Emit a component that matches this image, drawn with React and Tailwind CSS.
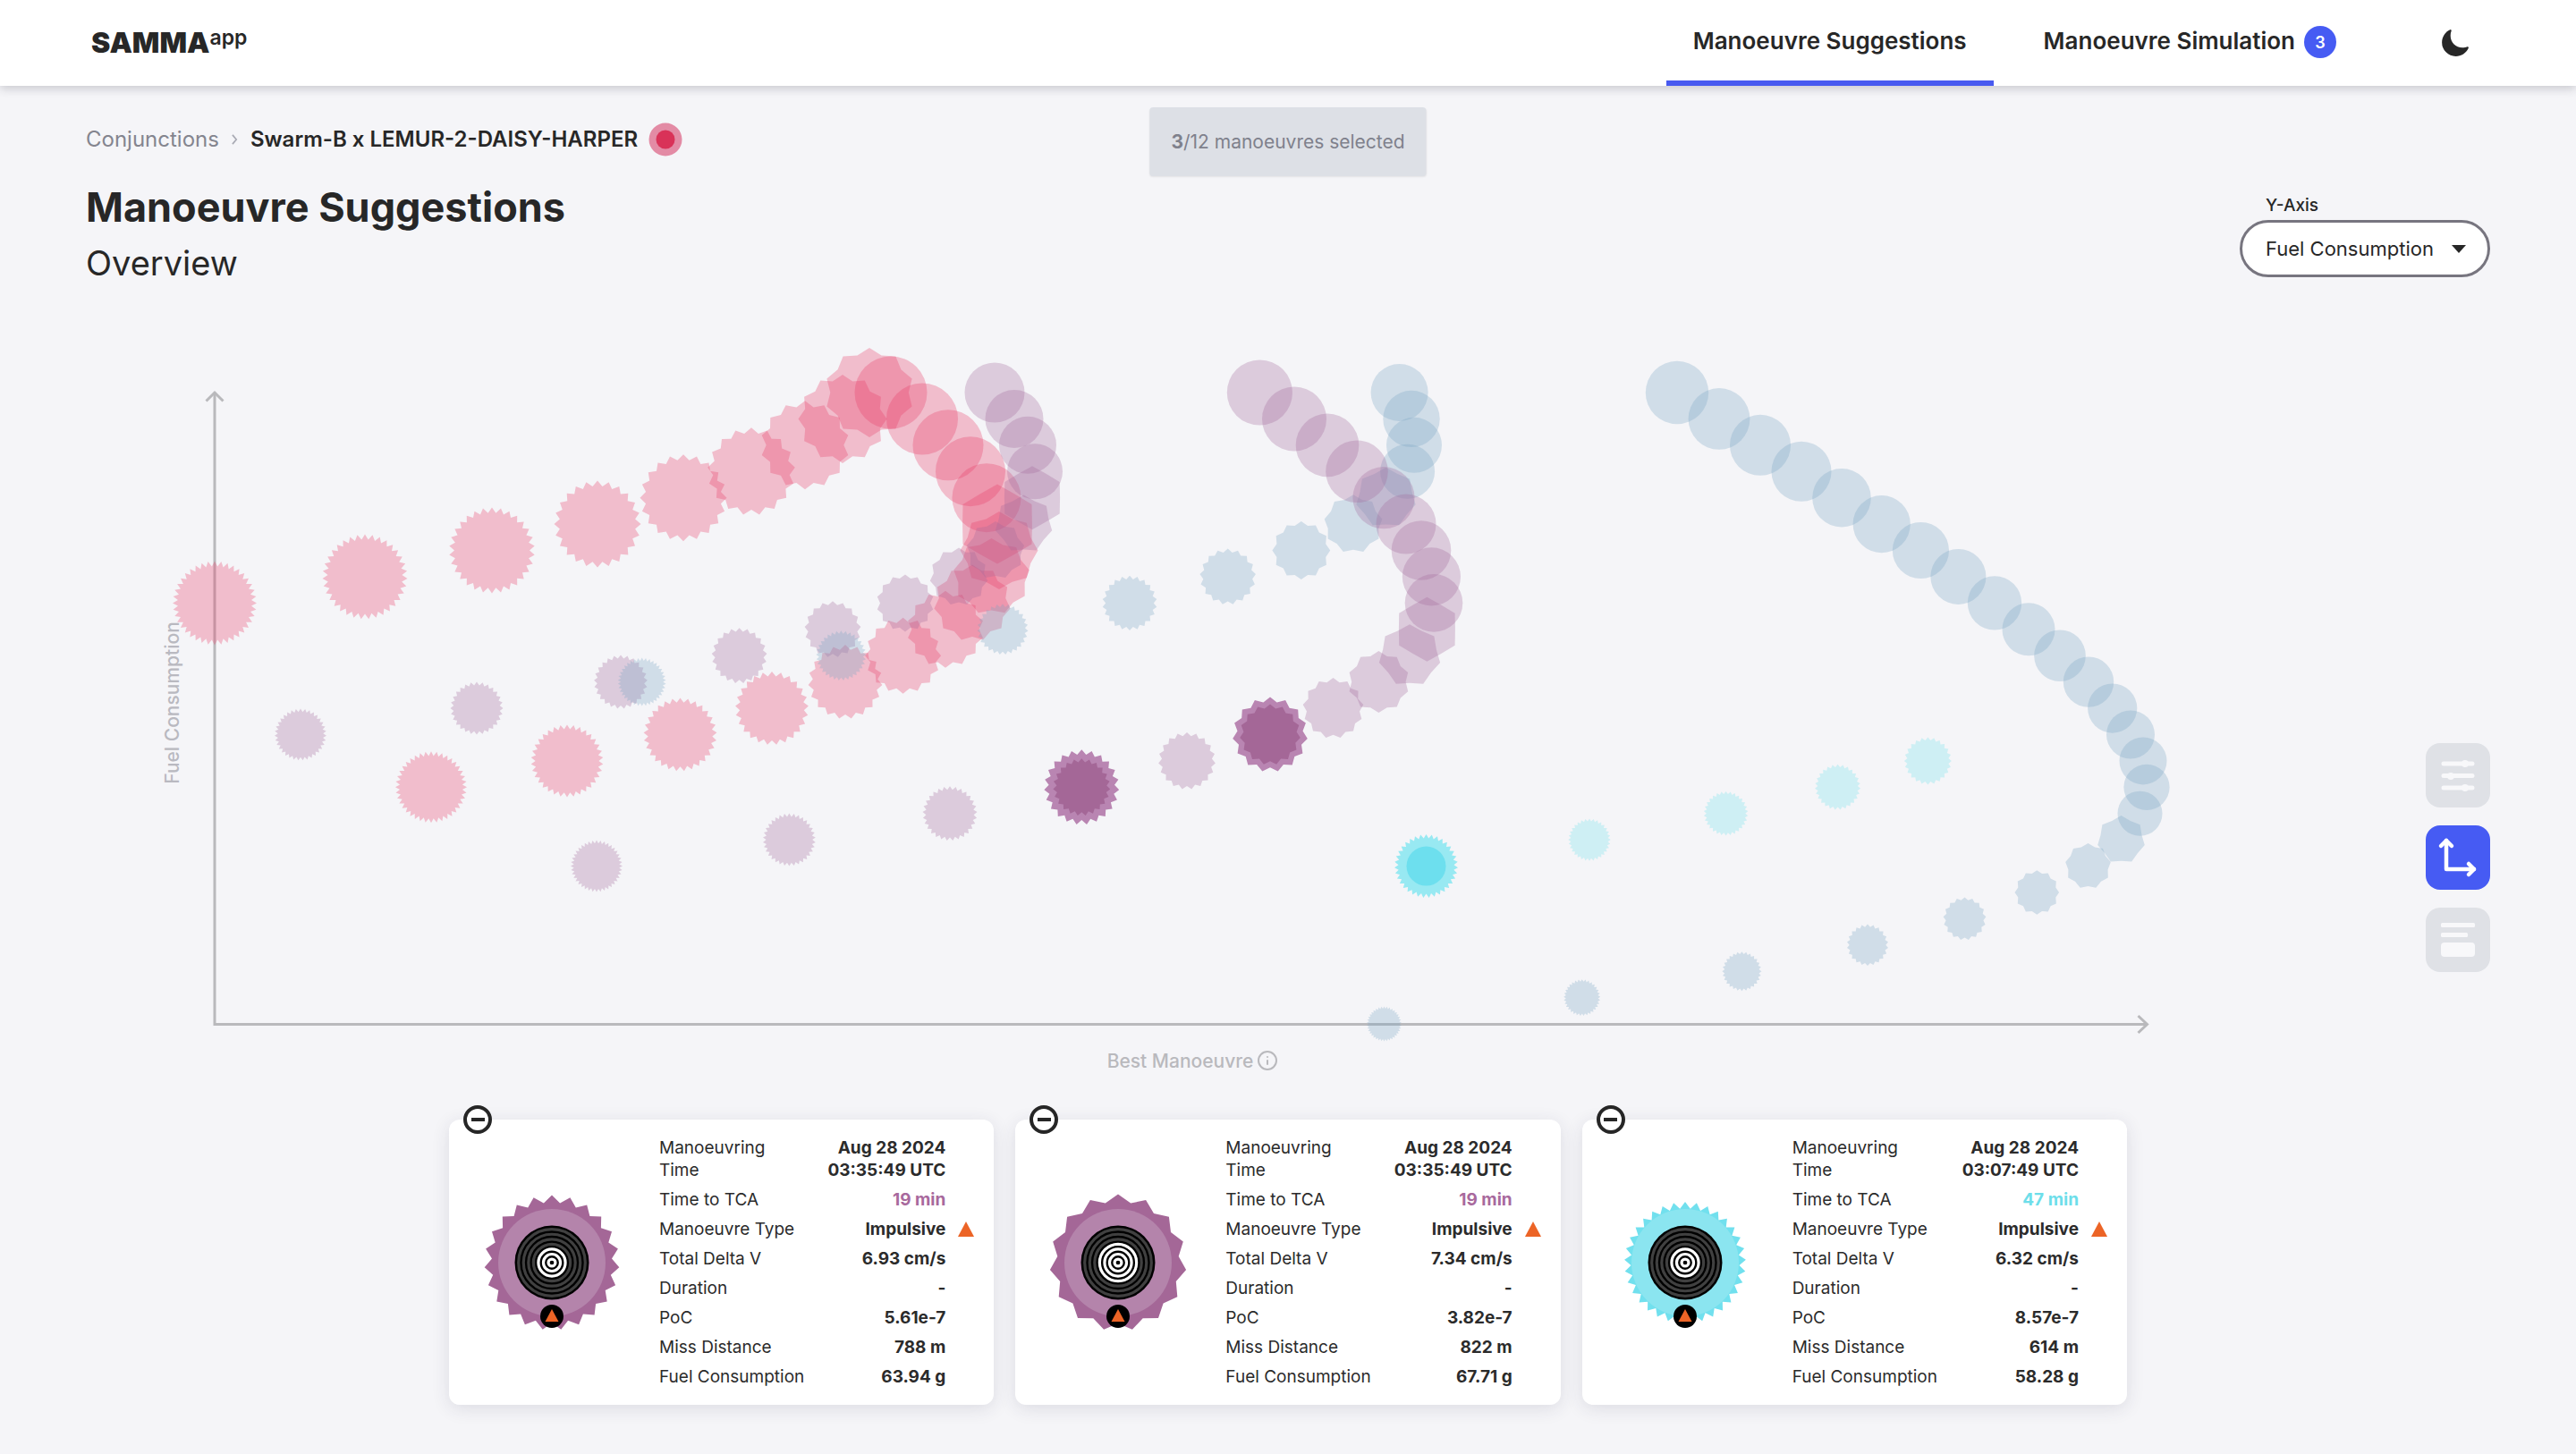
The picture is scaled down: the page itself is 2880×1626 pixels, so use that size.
import { useState } from "react";
import { Info } from "lucide-react";
import { IoMoon } from "react-icons/io5";

const RED = "#e83a66";
const PURPLE = "#a2699b";
const BLUE = "#7aa5c3";
const CYAN = "#73e1eb";

const TOP_ROW = 439;
const ROW_STEP = 29.42;

// Each marker: [row, x, radius, teeth]; teeth 0 is a plain circle.
// A selected marker adds [haloRadius, haloTeeth].
const SERIES = [
  {
    color: RED,
    markers: [
      [8, 240, 47, 40], [7, 408, 47.5, 35], [6, 550, 48, 30], [5, 668, 48.5, 24],
      [4, 764, 48.5, 20], [3, 840, 49, 17], [2, 900, 49.5, 14], [1, 942, 49.5, 12],
      [0, 972, 50, 10],
    ],
  },
  {
    color: RED,
    markers: [
      [0, 996, 40.5, 0], [1, 1031, 40, 0], [2, 1060, 39.5, 0], [3, 1085, 39, 0],
      [4, 1103, 38.5, 0], [5, 1115, 44.5, 6], [6, 1117, 43.5, 8], [7, 1108.5, 43, 9],
      [8, 1087, 43, 11], [9, 1057, 43, 14], [10, 1009.6, 42.5, 16], [11, 945, 41.5, 19],
      [12, 863, 41, 25], [13, 760.5, 41, 29], [14, 634, 40.5, 34], [15, 482, 40, 40],
    ],
  },
  {
    color: PURPLE,
    markers: [
      [0, 1112, 33.5, 0], [1, 1134, 32.5, 0], [2, 1149, 32, 0], [3, 1157, 31, 0],
      [4, 1154, 35.5, 6], [5, 1144.5, 32.5, 7], [6, 1113, 32.5, 9], [7, 1072, 32.5, 11],
      [8, 1012, 32, 14], [9, 931, 31.5, 17], [10, 826.6, 31, 21], [11, 694, 30, 25],
      [12, 533, 29.5, 28], [13, 336, 29, 35],
    ],
  },
  {
    color: BLUE,
    markers: [
      [0, 1564.6, 32, 0], [1, 1578, 31.7, 0], [2, 1581, 31, 0], [3, 1573.6, 30.5, 0],
      [4, 1549.5, 34, 7], [5, 1513, 32.8, 9], [6, 1454.8, 32.4, 12], [7, 1372.7, 31.4, 17],
      [8, 1263, 30.6, 22], [9, 1121, 28.5, 27], [10, 940.4, 28, 33], [11, 717.7, 27, 38],
    ],
  },
  {
    color: PURPLE,
    markers: [
      [0, 1408.4, 36.6, 0], [1, 1447, 36, 0], [2, 1484, 35.3, 0], [3, 1517, 34.8, 0],
      [4, 1547, 34.6, 0], [5, 1572, 33.5, 0], [6, 1589, 33.3, 0], [7, 1600.4, 32.6, 0],
      [8, 1603, 32.3, 0], [9, 1595.4, 36, 6], [10, 1576, 35, 7], [11, 1541.4, 34.5, 10],
      [12, 1490.5, 34, 13], [13, 1420, 34, 15, 42], [14, 1327, 32, 19], [15, 1209.3, 32, 23, 42],
      [16, 1062, 30.5, 29], [17, 882.4, 29.5, 34], [18, 667, 29, 40],
    ],
  },
  {
    color: BLUE,
    markers: [
      [0, 1875, 35.2, 0], [1, 1922, 34.4, 0], [2, 1968, 34, 0], [3, 2014, 33.5, 0],
      [4, 2059, 32.8, 0], [5, 2103.7, 32.1, 0], [6, 2147.4, 31.6, 0], [7, 2189.4, 31, 0],
      [8, 2230, 30.2, 0], [9, 2268, 29.5, 0], [10, 2303, 28.8, 0], [11, 2335, 28.2, 0],
      [12, 2361.7, 27.6, 0], [13, 2382, 27, 0], [14, 2396, 26.5, 0], [15, 2400, 25.6, 0],
      [16, 2392.5, 25, 0], [17, 2371.5, 27, 7], [18, 2334.5, 25.7, 9], [19, 2277.3, 24.8, 12],
      [20, 2196.5, 24, 17], [21, 2088, 23.2, 22], [22, 1947.4, 22, 28], [23, 1768.7, 20.5, 33],
      [24, 1547.5, 19.5, 38],
    ],
  },
  {
    color: CYAN,
    markers: [
      [14, 2155.4, 26.5, 24], [15, 2054.6, 25.5, 27], [16, 1929.6, 24.8, 30],
      [17, 1777, 23.7, 32], [18, 1594.5, 22, 0, 35.5, 35],
    ],
  },
];

const SELECTED = {
  [PURPLE]: { halo: "#b985b2", core: "#a46797" },
  [CYAN]: { halo: "#98e9f2", core: "#6ddfee" },
};

function starPoints(cx, cy, outer, teeth, ratio = 0.875) {
  const pts = [];
  for (let i = 0; i < teeth * 2; i++) {
    const r = i % 2 === 0 ? outer : outer * ratio;
    const a = (Math.PI * i) / teeth;
    pts.push(`${(cx + r * Math.sin(a)).toFixed(1)},${(cy - r * Math.cos(a)).toFixed(1)}`);
  }
  return pts.join(" ");
}

function Shape({ cx, cy, r, teeth, ...rest }) {
  return teeth ? (
    <polygon points={starPoints(cx, cy, r, teeth)} {...rest} />
  ) : (
    <circle cx={cx} cy={cy} r={r} {...rest} />
  );
}

function Marker({ data, color }) {
  const [row, x, r, teeth, halo, haloTeeth] = data;
  const y = TOP_ROW + row * ROW_STEP;
  if (!halo) return <Shape cx={x} cy={y} r={r} teeth={teeth} fill={color} fillOpacity={0.3} />;
  return (
    <g>
      <Shape cx={x} cy={y} r={halo} teeth={haloTeeth || teeth} fill={SELECTED[color].halo} />
      <Shape cx={x} cy={y} r={r} teeth={teeth} fill={SELECTED[color].core} />
    </g>
  );
}

function Chart() {
  return (
    <svg viewBox="0 0 2880 890" className="block w-full h-auto" role="img" aria-label="Fuel consumption by best manoeuvre">
      <g transform="translate(0 -340)">
        <g fill="none" stroke="#b9b9bc" strokeWidth="3">
          <path d="M240 439V1145.5H2400" />
          <path d="M230.500 448.500L240 439L249.500 448.500" />
          <path d="M2390.500 1136L2400.500 1145.500L2390.500 1155" />
        </g>
        <text transform="translate(200 786) rotate(-90)" textAnchor="middle" className="text-[21px] font-medium fill-[#b9b9c0]">
          Fuel Consumption
        </text>
        {SERIES.map((s, i) => (
          <g key={i}>
            {s.markers.map((m) => (
              <Marker key={m[0]} data={m} color={s.color} />
            ))}
          </g>
        ))}
      </g>
    </svg>
  );
}

function Badge({ teeth, radius, color, inner, whiteRings }) {
  const rings = [1, 2, 3, 4, 5, 6, 7];
  return (
    <svg viewBox="-80 -80 160 160" className="w-40 h-40 shrink-0" aria-hidden="true">
      <polygon points={starPoints(0, 0, radius, teeth, 0.89)} fill={color} />
      <circle r="60" fill={inner} />
      <circle r="41.500" fill="#000" />
      {rings.map((k) => (
        <circle
          key={k}
          r={5.56 * k - 1.6}
          fill="none"
          stroke={k <= whiteRings ? "#fff" : "#404040"}
          strokeWidth="3.200"
        />
      ))}
      <circle cy="60" r="13" fill="#000" />
      <path d="M0 52L7.500 66H-7.500Z" fill="#ec6426" />
    </svg>
  );
}

const CARDS = [
  {
    time: "03:35:49 UTC", tca: "19 min", tcaClass: "text-[#a8699d]", dv: "6.93 cm/s", poc: "5.61e-7", miss: "788 m", fuel: "63.94 g",
    badge: { teeth: 23, radius: 75.5, color: "#a46797", inner: "#b484ab", whiteRings: 3 },
  },
  {
    time: "03:35:49 UTC", tca: "19 min", tcaClass: "text-[#a8699d]", dv: "7.34 cm/s", poc: "3.82e-7", miss: "822 m", fuel: "67.71 g",
    badge: { teeth: 15, radius: 76.5, color: "#a46797", inner: "#b484ab", whiteRings: 4 },
  },
  {
    time: "03:07:49 UTC", tca: "47 min", tcaClass: "text-[#6ddeea]", dv: "6.32 cm/s", poc: "8.57e-7", miss: "614 m", fuel: "58.28 g",
    badge: { teeth: 33, radius: 68, color: "#71e0ee", inner: "#8be5f0", whiteRings: 3 },
  },
];

function Row({ label, children, valueClass = "", mark }) {
  return (
    <div className="flex items-start">
      <dt className="w-[180px]">{label}</dt>
      <dd className={`flex-1 text-right font-bold ${valueClass}`}>{children}</dd>
      <dd className="w-[54px] pl-3.5 pt-1" aria-hidden="true">
        {mark && (
          <svg viewBox="0 0 18 17" className="w-[18px] h-[17px]">
            <path d="M9 0L18 17H0Z" fill="#ec6426" />
          </svg>
        )}
      </dd>
    </div>
  );
}

function Card({ c }) {
  return (
    <article className="relative flex items-center rounded-xl bg-white pl-[35px] py-[19px] shadow-[0_4px_20px_rgba(40,40,70,0.12)]">
      <button aria-label="Remove manoeuvre" className="absolute left-4 -top-4 flex h-8 w-8 items-center justify-center rounded-full border-4 border-[#262626] bg-white">
        <span className="h-1 w-[15px] bg-[#262626]" />
      </button>
      <Badge {...c.badge} />
      <dl className="ml-10 flex flex-1 flex-col gap-2 text-[19px] leading-[25px] text-[#2b2b2b]">
        <Row label={<>Manoeuvring<br />Time</>}>Aug 28 2024<br />{c.time}</Row>
        <Row label="Time to TCA" valueClass={c.tcaClass}>{c.tca}</Row>
        <Row label="Manoeuvre Type" mark>Impulsive</Row>
        <Row label="Total Delta V">{c.dv}</Row>
        <Row label="Duration">-</Row>
        <Row label="PoC">{c.poc}</Row>
        <Row label="Miss Distance">{c.miss}</Row>
        <Row label="Fuel Consumption">{c.fuel}</Row>
      </dl>
    </article>
  );
}

function SlidersIcon() {
  return (
    <svg viewBox="0 0 72 72" className="h-full w-full" fill="#f8f8fa" stroke="#f8f8fa" strokeWidth="5" strokeLinecap="round">
      <path d="M20 23H52M20 36.500H52M20 50H52" />
      <circle cx="44" cy="23" r="1.500" />
      <circle cx="28" cy="37" r="1.500" />
      <circle cx="44" cy="50" r="1.500" />
    </svg>
  );
}

function AxesIcon() {
  return (
    <svg viewBox="0 0 72 72" className="h-full w-full" fill="none" stroke="#fff" strokeWidth="4.500" strokeLinecap="round" strokeLinejoin="round">
      <path d="M23 17V49H54" />
      <path d="M17 23L23 17L29 23M48 43L54 49L48 55" />
    </svg>
  );
}

function DetailIcon() {
  return (
    <svg viewBox="0 0 72 72" className="h-full w-full" fill="#f8f8fa">
      <rect x="17" y="17" width="38" height="5" rx="1.500" />
      <rect x="17" y="28" width="30" height="5" rx="1.500" />
      <rect x="17" y="39" width="38" height="16" rx="4" />
    </svg>
  );
}

const VIEWS = [
  { label: "Filters", Icon: SlidersIcon },
  { label: "Chart", Icon: AxesIcon, active: true },
  { label: "Details", Icon: DetailIcon },
];

export default function App() {
  const [axis, setAxis] = useState("Fuel Consumption");
  return (
    <div className="min-h-screen bg-[#f5f5f8] font-[Inter,sans-serif] text-[#272727]">
      <header className="relative z-10 flex h-24 items-stretch bg-white pl-[102px] pr-[118px] shadow-[0_3px_10px_rgba(40,40,60,0.22)]">
        <a href="#home" className="flex items-start pt-7 leading-10">
          <span className="text-[32px] font-black">SAMMA</span>
          <span className="text-[23px] font-semibold leading-7">app</span>
        </a>
        <nav className="ml-auto flex items-stretch text-[26px] font-semibold">
          <a href="#suggestions" aria-current="page" className="flex items-center border-b-[6px] border-[#485af0] px-[30px]">
            Manoeuvre Suggestions
          </a>
          <a href="#simulation" className="flex items-center gap-2.5 border-b-[6px] border-transparent pl-14">
            Manoeuvre Simulation
            <span className="mt-1 flex h-9 w-9 items-center justify-center rounded-full bg-[#465bf3] text-[18px] text-white">3</span>
          </a>
        </nav>
        <button aria-label="Toggle dark mode" className="ml-[116px] flex items-center">
          <IoMoon className="h-[34px] w-[34px]" />
        </button>
      </header>

      <main className="relative pb-14">
        <div role="status" className="absolute left-1/2 top-6 -translate-x-1/2 whitespace-nowrap rounded bg-[#dde0e6] px-6 py-6 text-[21px] leading-[29px] text-[#7f818c] shadow-[0_1px_2px_rgba(0,0,0,0.08)]">
          <strong>3</strong>/12 manoeuvres selected
        </div>

        <div className="flex items-end justify-between px-24 pt-10">
          <div>
            <nav aria-label="Breadcrumb" className="flex h-10 items-center text-[24px]">
              <a href="#conjunctions" className="text-[#84858f]">Conjunctions</a>
              <svg viewBox="0 0 8 14" className="mx-3.5 h-3 w-[7px]" fill="none" stroke="#a9aab4" strokeWidth="2" aria-hidden="true">
                <path d="M1 1L6 7L1 13" />
              </svg>
              <span className="font-semibold" aria-current="page">Swarm-B x LEMUR-2-DAISY-HARPER</span>
              <svg viewBox="0 0 38 38" className="ml-3 h-[38px] w-[38px]" aria-hidden="true">
                <circle cx="19" cy="19" r="18.500" fill="#e38ba5" />
                <circle cx="19" cy="19" r="10.500" fill="#d93258" />
              </svg>
            </nav>
            <h1 className="mt-6 text-[45px] font-bold leading-[64px]">Manoeuvre Suggestions</h1>
            <h2 className="text-[38px] leading-[60px]">Overview</h2>
          </div>
          <div className="mb-3.5 flex flex-col">
            <label htmlFor="y-axis" className="mb-1 pl-[29px] text-[19px] font-medium leading-6">Y-Axis</label>
            <div className="relative">
              <select
                id="y-axis"
                value={axis}
                onChange={(e) => setAxis(e.target.value)}
                className="h-16 w-[280px] appearance-none rounded-full border-[3px] border-[#77757f] bg-white pl-[26px] pr-14 text-[22px]"
              >
                <option>Fuel Consumption</option>
              </select>
              <svg viewBox="0 0 16 9" className="pointer-events-none absolute right-[27px] top-[28px] h-[9px] w-4" aria-hidden="true">
                <path d="M0 0H16L8 9Z" fill="#272727" />
              </svg>
            </div>
          </div>
        </div>

        <div className="relative mt-4">
          <Chart />
          <div className="absolute bottom-7 left-0 flex w-full justify-center pr-[213px] text-[21px] text-[#b9b9bd]">
            <span className="flex items-center gap-1 font-medium">
              Best Manoeuvre
              <Info className="h-6 w-6" strokeWidth={2} aria-hidden="true" />
            </span>
          </div>
          <div className="absolute right-24 top-[491px] flex flex-col gap-5" role="group" aria-label="View">
            {VIEWS.map(({ label, Icon, active }) => (
              <button
                key={label}
                aria-label={label}
                aria-pressed={!!active}
                className={`h-[72px] w-[72px] overflow-hidden rounded-2xl ${active ? "bg-[#465bf3]" : "bg-[#dfe1e6]"}`}
              >
                <Icon />
              </button>
            ))}
          </div>
        </div>

        <section aria-label="Selected manoeuvres" className="mx-auto mt-[22px] grid max-w-[1876px] grid-cols-3 gap-6">
          {CARDS.map((c, i) => (
            <Card key={i} c={c} />
          ))}
        </section>
      </main>
    </div>
  );
}
